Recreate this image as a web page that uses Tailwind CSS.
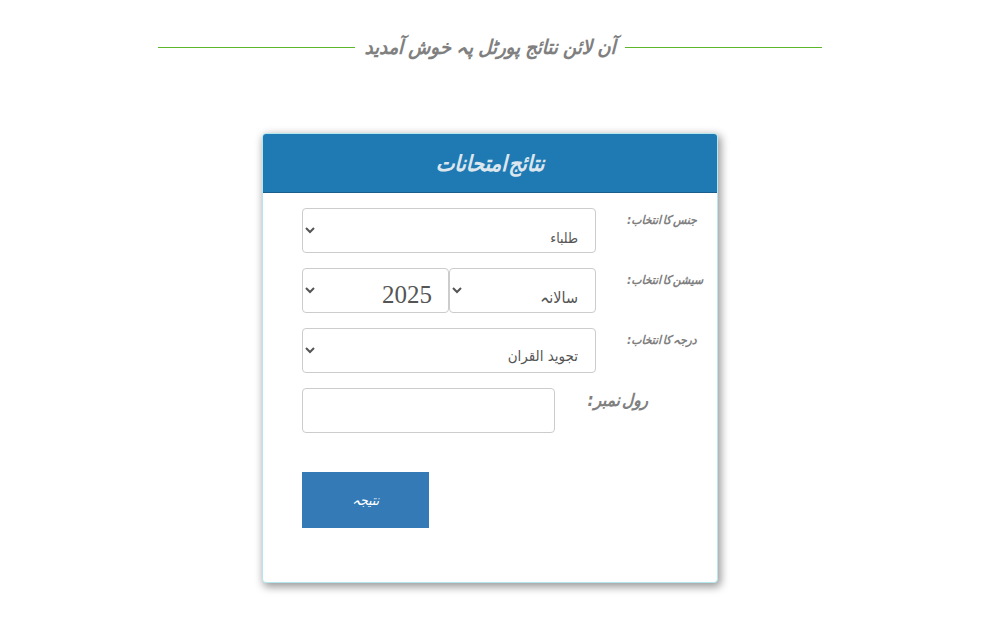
<!DOCTYPE html>
<html lang="ur" dir="rtl">
<head>
  <meta charset="UTF-8">
  <title>نتائج امتحانات</title>
  <script src="https://cdn.jsdelivr.net/npm/@tailwindcss/browser@4"></script>
</head>
<body class="bg-white font-['DejaVu_Sans_Condensed','DejaVu_Sans',sans-serif]">
  <div class="w-[980px] min-h-[631px] ml-auto mr-[13px] pb-[40px]">
    <!-- Page heading with rules on both sides -->
    <div class="pt-[22px] mx-auto w-[663px] h-[133px] text-[#808080]">
      <div class="flex items-center gap-[10px] h-[50px]">
        <span class="flex-1 h-px bg-[#5cb82a]"></span>
        <h1 class="italic font-bold text-[20px] leading-[50px] [word-spacing:-1px]">آن لائن نتائج پورٹل پہ خوش آمدید</h1>
        <span class="flex-1 h-px bg-[#5cb82a]"></span>
      </div>
    </div>

    <!-- Result form card -->
    <div class="mx-auto w-[456px] h-[450px] rounded-[4px] bg-white border border-[#b5e8ee] shadow-[2px_3px_8px_1px_rgba(0,0,0,0.4)]">
      <div class="h-[59px] rounded-t-[3px] bg-[#1f7ab3] border-b border-[#1a5f8c] flex items-center justify-center">
        <h2 class="italic font-bold text-[22px] text-[#dce6ee] [word-spacing:-5px]">نتائج امتحانات</h2>
      </div>
      <form class="pt-[15px] pr-[14px] pl-[39px] flex flex-col gap-[15px]">
        <div class="flex justify-between">
          <label class="w-[76px] text-left whitespace-nowrap italic font-bold text-[12px] text-[#808080] pt-[3px] [word-spacing:-2px]">جنس کا انتخاب:</label>
          <select class="w-[294px] h-[45px] rounded-[4px] border border-[#cccccc] bg-white text-[14px] text-[#555555] pt-[14px] pr-[13px] pl-[2px]">
            <option>طلباء</option>
          </select>
        </div>
        <div class="flex justify-between">
          <label class="w-[76px] text-left whitespace-nowrap italic font-bold text-[12px] text-[#808080] pt-[3px] [word-spacing:-2px]">سیشن کا انتخاب:</label>
          <div class="flex w-[294px]">
            <select class="w-[147px] h-[45px] rounded-[4px] border border-[#cccccc] bg-white text-[16px] text-[#555555] pt-[14px] pr-[13px] pl-[2px]">
              <option>سالانہ</option>
            </select>
            <select class="w-[147px] h-[45px] rounded-[4px] border border-[#cccccc] bg-white font-['Liberation_Serif',serif] text-[25px] text-[#555555] pt-[8px] pr-[12px] pl-[2px]">
              <option>2025</option>
            </select>
          </div>
        </div>
        <div class="flex justify-between">
          <label class="w-[76px] text-left whitespace-nowrap italic font-bold text-[12px] text-[#808080] pt-[3px] [word-spacing:-2px]">درجہ کا انتخاب:</label>
          <select class="w-[294px] h-[45px] rounded-[4px] border border-[#cccccc] bg-white text-[15px] text-[#555555] pt-[10px] pr-[13px] pl-[2px]">
            <option>تجوید القران</option>
          </select>
        </div>
        <div class="flex justify-between">
          <label class="italic font-bold text-[17px] text-[#808080] pr-[55px] [word-spacing:-3px]">رول نمبر:</label>
          <input type="text" class="w-[253px] h-[45px] rounded-[4px] border border-[#cccccc] bg-white">
        </div>
        <div class="flex justify-end pt-[24px]">
          <button type="submit" class="w-[127px] h-[56px] bg-[#337ab7] text-white italic text-[14px]">نتیجہ</button>
        </div>
      </form>
    </div>
  </div>
</body>
</html>
